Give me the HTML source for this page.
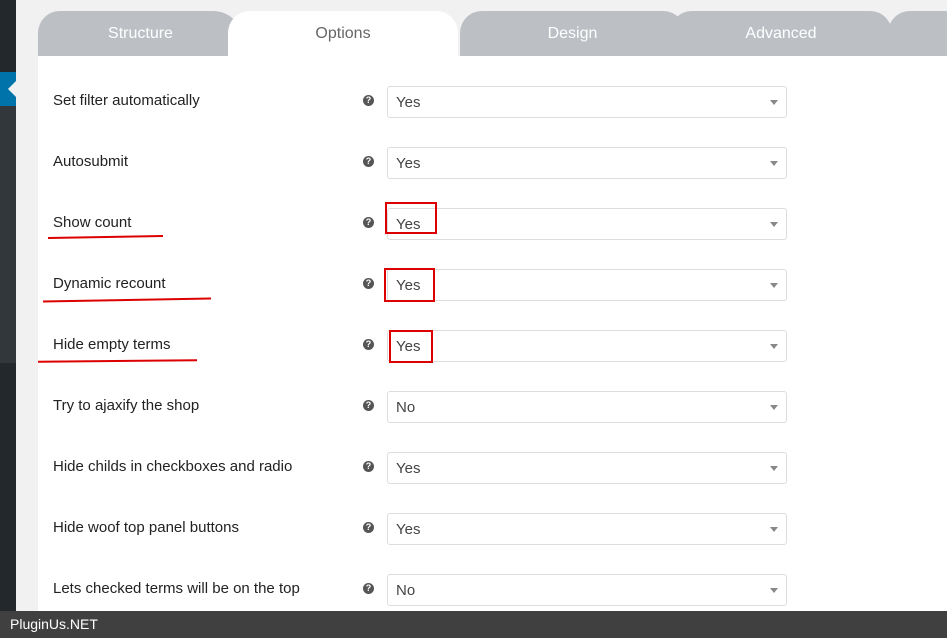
<!DOCTYPE html>
<html><head><meta charset="utf-8"><style>
*{margin:0;padding:0;box-sizing:border-box}
body{width:947px;height:638px;overflow:hidden;background:#f1f1f1;font-family:"Liberation Sans",sans-serif;position:relative}
.sb{position:absolute;left:0;top:0;width:16px;height:638px;background:#23282d}
.sb2{position:absolute;left:0;top:106px;width:16px;height:257px;background:#32373c}
.sbb{position:absolute;left:0;top:72px;width:16px;height:34px;background:#0073aa}
.sbb:after{content:"";position:absolute;left:8px;top:9px;border-right:8px solid #f1f1f1;border-top:8px solid transparent;border-bottom:8px solid transparent}
.panel{position:absolute;left:38px;top:56px;width:909px;height:560px;background:#fff}
.tab{position:absolute;top:11px;height:45px;background:#bcc0c5;color:#fff;font-size:16px;text-align:center;line-height:45px;border-radius:22px 22px 0 0}
.tab.on{background:#fff;color:#666}
.row{position:absolute;left:53px;font-size:15px;color:#222}
.q{position:absolute;left:363px;width:11px;height:11px;border-radius:50%;background:#555;color:#fff;font-size:9px;font-weight:bold;text-align:center;line-height:11px}
.sel{position:absolute;left:387px;width:400px;height:32px;border:1px solid #ddd;border-radius:3px;background:#fff;font-size:15px;color:#444;padding:7px 8px}
.sel:after{content:"";position:absolute;right:8px;top:13px;border-top:5px solid #888;border-left:4px solid transparent;border-right:4px solid transparent}
.box{position:absolute;border:2px solid #d00}
.ln{position:absolute;height:2px;background:#d00}
.ft{position:absolute;left:0;top:611px;width:947px;height:27px;background:#404040;color:#fff;font-size:14px;line-height:27px;padding-left:10px}
</style></head><body>
<div class="sb"></div><div class="sb2"></div><div class="sbb"></div>
<div class="panel"></div>
<div class="tab" style="left:38px;width:205px;border-radius:22px 30px 0 0">Structure</div>
<div class="tab" style="left:460px;width:225px">Design</div>
<div class="tab" style="left:670px;width:222px">Advanced</div>
<div class="tab" style="left:888px;width:80px"></div>
<div class="tab on" style="left:228px;width:230px">Options</div>

<div class="row" style="top:92px">Set filter automatically</div><div class="q" style="top:95px">?</div><div class="sel" style="top:86px">Yes</div>
<div class="row" style="top:153px">Autosubmit</div><div class="q" style="top:156px">?</div><div class="sel" style="top:147px">Yes</div>
<div class="row" style="top:214px">Show count</div><div class="q" style="top:217px">?</div><div class="sel" style="top:208px">Yes</div>
<div class="row" style="top:275px">Dynamic recount</div><div class="q" style="top:278px">?</div><div class="sel" style="top:269px">Yes</div>
<div class="row" style="top:336px">Hide empty terms</div><div class="q" style="top:339px">?</div><div class="sel" style="top:330px">Yes</div>
<div class="row" style="top:397px">Try to ajaxify the shop</div><div class="q" style="top:400px">?</div><div class="sel" style="top:391px">No</div>
<div class="row" style="top:458px">Hide childs in checkboxes and radio</div><div class="q" style="top:461px">?</div><div class="sel" style="top:452px">Yes</div>
<div class="row" style="top:519px">Hide woof top panel buttons</div><div class="q" style="top:522px">?</div><div class="sel" style="top:513px">Yes</div>
<div class="row" style="top:580px">Lets checked terms will be on the top</div><div class="q" style="top:583px">?</div><div class="sel" style="top:574px">No</div>

<div class="box" style="left:385px;top:202px;width:52px;height:32px"></div>
<div class="box" style="left:384px;top:268px;width:51px;height:34px"></div>
<div class="box" style="left:389px;top:330px;width:44px;height:33px"></div>
<div class="ln" style="left:48px;top:236px;width:115px;transform:rotate(-1deg)"></div>
<div class="ln" style="left:43px;top:299px;width:168px;transform:rotate(-1deg)"></div>
<div class="ln" style="left:38px;top:360px;width:159px;transform:rotate(-0.5deg)"></div>
<div class="ft">PluginUs.NET</div>
</body></html>
